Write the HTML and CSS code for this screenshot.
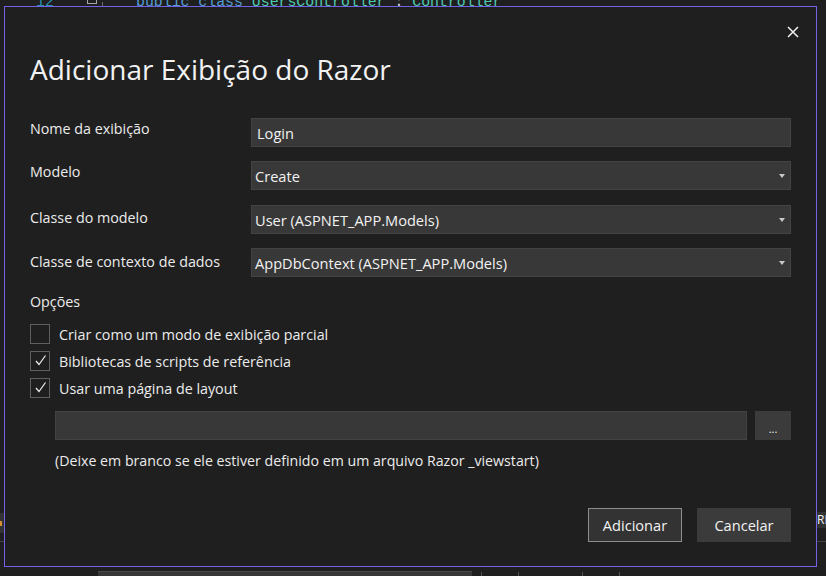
FILE: index.html
```html
<!DOCTYPE html>
<html lang="pt-BR">
<head>
<meta charset="utf-8">
<title>Adicionar Exibição do Razor</title>
<link rel="stylesheet" href="styles.css">
</head>
<body>
<div class="screen">
  <div class="editor-line">
    <span class="ln">12</span>
    <span class="fold"></span>
    <span class="guide"></span>
    <span class="code"><span class="kw">public class</span> <span class="ty">UsersController</span> <span class="pn">:</span> <span class="ty">Controller</span></span>
  </div>
  <div class="edge-left"><span class="dot"></span></div>
  <div class="edge-left-line"></div>
  <div class="edge-right">RL</div>
  <div class="edge-right-line"></div>
  <div class="bottom-strip">
    <span class="strip-bar"></span>
    <span class="tick t1"></span>
    <span class="tick t2"></span>
    <span class="tick t3"></span>
    <span class="tick t4"></span>
  </div>

  <div class="dialog">
    <div class="dialog-head">
      <button class="close" aria-label="Fechar">
        <svg width="12" height="12" viewBox="0 0 12 12"><path d="M1 1 L11 11 M11 1 L1 11" stroke="#f2f2f2" stroke-width="1.5" fill="none"/></svg>
      </button>
    </div>
    <h1 class="title">Adicionar Exibição do Razor</h1>

    <div class="form">
      <div class="label">Nome da exibição</div>
      <div class="field text-field">Login</div>

      <div class="label">Modelo</div>
      <div class="field select">Create<span class="caret"></span></div>

      <div class="label l3">Classe do modelo</div>
      <div class="field select">User (ASPNET_APP.Models)<span class="caret"></span></div>

      <div class="label l4">Classe de contexto de dados</div>
      <div class="field select">AppDbContext (ASPNET_APP.Models)<span class="caret"></span></div>
    </div>

    <div class="options-title">Opções</div>
    <div class="checks">
      <div class="check"><span class="box"></span><span>Criar como um modo de exibição parcial</span></div>
      <div class="check"><span class="box checked"><svg width="20" height="20" viewBox="0 0 20 20"><path d="M6 10 L9 13.5 L15.5 4.5" stroke="#f0f0f0" stroke-width="1.2" fill="none"/></svg></span><span>Bibliotecas de scripts de referência</span></div>
      <div class="check"><span class="box checked"><svg width="20" height="20" viewBox="0 0 20 20"><path d="M6 10 L9 13.5 L15.5 4.5" stroke="#f0f0f0" stroke-width="1.2" fill="none"/></svg></span><span>Usar uma página de layout</span></div>
    </div>

    <div class="layout-row">
      <div class="field path"></div>
      <button class="browse">...</button>
    </div>
    <p class="hint">(Deixe em branco se ele estiver definido em um arquivo Razor _viewstart)</p>

    <div class="actions">
      <button class="btn btn-primary">Adicionar</button>
      <button class="btn">Cancelar</button>
    </div>
  </div>
</div>
</body>
</html>
```

FILE: styles.css
```css
* { box-sizing: border-box; }

html, body {
  margin: 0;
  padding: 0;
  background: #1f1f1f;
}

body {
  width: 826px;
  height: 576px;
  overflow: hidden;
  font-family: "Open Sans", "Noto Sans", sans-serif;
  font-size: 14.3px;
  color: #f1f1f1;
}

.screen {
  position: relative;
  width: 826px;
  height: 576px;
  overflow: hidden;
  background: #1f1f1f;
}

/* ---- editor content behind the dialog ---- */
.editor-line {
  position: absolute;
  left: 0;
  top: -8px;
  width: 826px;
  height: 20px;
  font-family: "Liberation Mono", monospace;
  font-size: 14.85px;
  line-height: 20px;
}
.editor-line .ln {
  position: absolute;
  top: 0;
  left: 36px;
  color: #2b91af;
}
.editor-line .fold {
  position: absolute;
  left: 87px;
  top: 2px;
  width: 10px;
  height: 10px;
  border: 1px solid #a5a5a5;
}
.editor-line .guide {
  position: absolute;
  left: 102px;
  top: 10px;
  width: 1px;
  height: 4px;
  background: #6a6a6a;
}
.editor-line .code {
  position: absolute;
  top: 0;
  left: 136px;
  white-space: pre;
}
.kw { color: #569cd6; }
.ty { color: #4ec9b0; }
.pn { color: #d4d4d4; }

.edge-left {
  position: absolute;
  left: 0;
  top: 513px;
  width: 4px;
  height: 20px;
  background: #333333;
}
.edge-left .dot {
  display: block;
  margin-top: 8px;
  width: 2px;
  height: 5px;
  background: #d6902f;
}
.edge-left-line {
  position: absolute;
  left: 0;
  top: 541px;
  width: 4px;
  height: 1px;
  background: #444;
}
.edge-right {
  position: absolute;
  left: 817px;
  top: 512px;
  width: 9px;
  height: 16px;
  background: #333333;
  font-family: "Open Sans", sans-serif;
  font-size: 12px;
  line-height: 16px;
  color: #f0f0f0;
  overflow: hidden;
  white-space: nowrap;
}
.edge-right-line {
  position: absolute;
  left: 817px;
  top: 541px;
  width: 9px;
  height: 1px;
  background: #444;
}
.bottom-strip {
  position: absolute;
  left: 0;
  top: 570px;
  width: 826px;
  height: 6px;
}
.strip-bar {
  position: absolute;
  left: 98px;
  top: 1px;
  width: 374px;
  height: 6px;
  background: #373737;
  border-top: 1px solid #4a4a4a;
}
.tick {
  position: absolute;
  top: 2px;
  width: 1px;
  height: 4px;
  background: #555;
}
.t1 { left: 481px; }
.t2 { left: 518px; }
.t3 { left: 582px; }
.t4 { left: 619px; }

/* ---- dialog ---- */
.dialog {
  position: absolute;
  left: 4px;
  top: 6px;
  width: 813px;
  height: 561px;
  background: #1f1f1f;
  border: 1px solid #7262e6;
  padding: 0 25px 24px 25px;
  display: flex;
  flex-direction: column;
}

.dialog-head {
  display: flex;
  justify-content: flex-end;
  padding-top: 14px;
}
.close {
  width: 22px;
  height: 22px;
  margin-right: -12.5px;
  padding: 0;
  border: 0;
  background: transparent;
  display: flex;
  align-items: center;
  justify-content: center;
}
.close svg { display: block; }

.title {
  margin: 8px 0 0 0;
  font-size: 28px;
  font-weight: 400;
  line-height: 36px;
  color: #f2f2f2;
}

.form {
  margin-top: 31px;
  display: grid;
  grid-template-columns: 221px 1fr;
  grid-auto-rows: 29px;
  row-gap: 14.3px;
}
.label {
  padding-top: 1px;
  line-height: 20px;
  color: #ececec;
}
.l3 { padding-top: 3px; }
.l4 { padding-top: 4.5px; }

.field {
  position: relative;
  height: 29px;
  background: #383838;
  border: 1px solid #434343;
  line-height: 27px;
  padding: 1px 0 0 3px;
  color: #f2f2f2;
  font-size: 14.6px;
  white-space: nowrap;
}
.text-field { padding-left: 5px; }
.caret {
  position: absolute;
  right: 5px;
  top: 12px;
  width: 0;
  height: 0;
  border-left: 3.5px solid transparent;
  border-right: 3.5px solid transparent;
  border-top: 4px solid #c9c9c9;
}

.options-title {
  margin-top: 15px;
  line-height: 20px;
  color: #ececec;
}

.checks {
  margin-top: 12px;
  display: flex;
  flex-direction: column;
  gap: 7px;
}
.check {
  display: flex;
  align-items: center;
  gap: 9px;
  height: 20px;
  line-height: 20px;
  color: #ececec;
}
.check span:last-child { padding-top: 3px; }
.box {
  width: 20px;
  height: 20px;
  border: 1px solid #5f5f5f;
  flex: none;
  position: relative;
}
.box svg {
  position: absolute;
  left: -1px;
  top: -1px;
}

.layout-row {
  margin-top: 13px;
  margin-left: 25px;
  display: flex;
  gap: 8px;
  height: 29px;
}
.path { flex: 1; }
.browse {
  width: 36px;
  height: 29px;
  border: 0;
  padding: 8px 0 0 0;
  background: #3b3b3b;
  color: #f0f0f0;
  font-family: "Open Sans", sans-serif;
  font-size: 11px;
  line-height: 12px;
}

.hint {
  margin: 11px 0 0 25px;
  font-size: 14.2px;
  line-height: 20px;
  color: #ececec;
}

.actions {
  margin-top: auto;
  display: flex;
  justify-content: flex-end;
  gap: 15px;
}
.btn {
  width: 94px;
  height: 34px;
  padding: 0;
  border: 1px solid transparent;
  background: #3b3b3b;
  color: #f2f2f2;
  font-family: "Open Sans", "Noto Sans", sans-serif;
  font-size: 14.6px;
  line-height: 30px;
}
.btn-primary {
  background: #333333;
  border-color: #8e8e8e;
}
```
